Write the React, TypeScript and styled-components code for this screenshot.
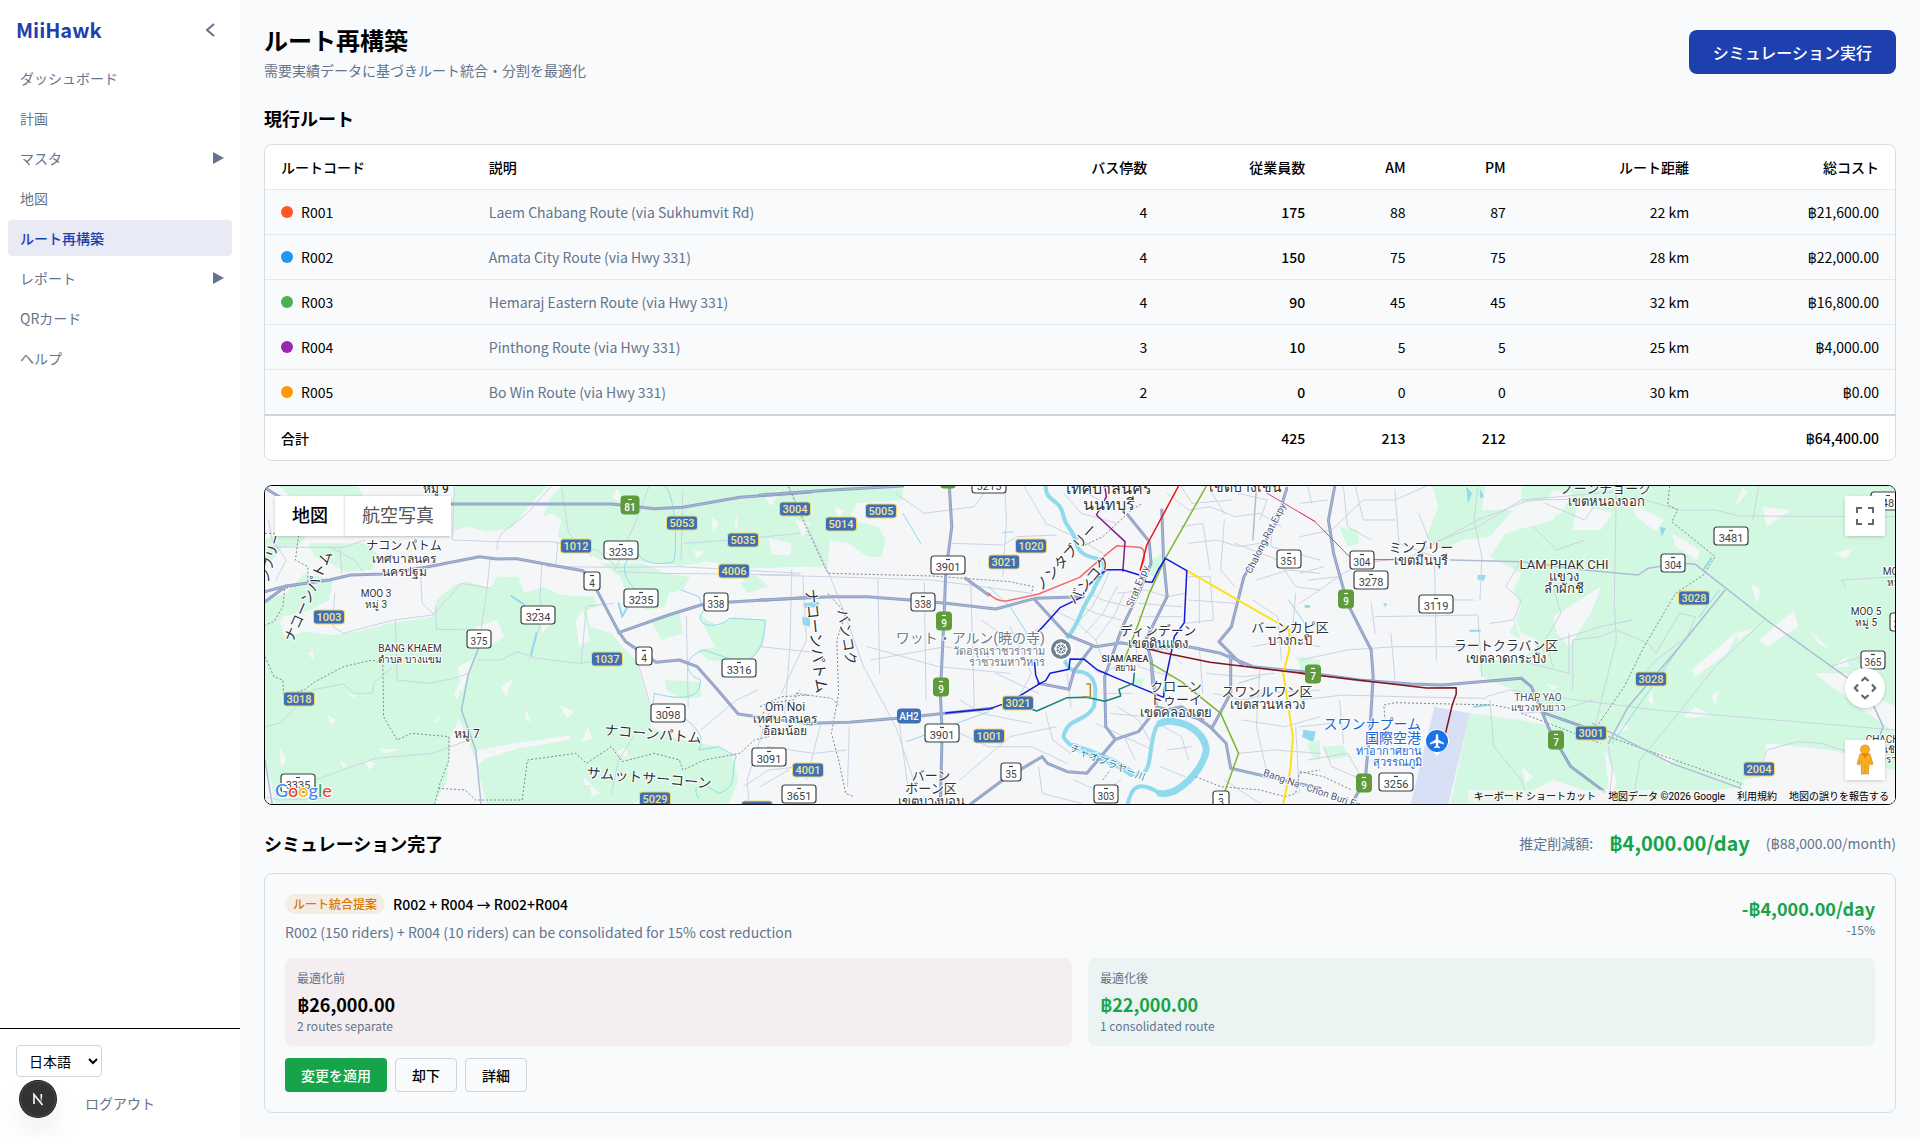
import React, { useState } from "react";
import styled, { createGlobalStyle, css } from "styled-components";

const color = {
  page: "#f8fafc",
  surface: "#ffffff",
  text: "#000000",
  muted: "#64748b",
  line: "#d8dde3",
  rowLine: "#e5e8ec",
  strong: "#cbd5dc",
  primary: "#1e40af",
  success: "#16a34a",
};

const GlobalStyle = createGlobalStyle`
  *, *::before, *::after { box-sizing: border-box; }
  body {
    margin: 0;
    background: ${color.page};
    color: ${color.text};
    font-family: "Noto Sans CJK JP", Lato, sans-serif;
    font-size: 14px;
    line-height: 20px;
  }
  h1, h2, p { margin: 0; }
  button, select { font: inherit; color: inherit; }
  button { cursor: pointer; }
`;

const Shell = styled.div`
  display: flex;
  min-height: 100vh;
`;

/* ---------- Sidebar ---------- */

const Sidebar = styled.aside`
  position: sticky;
  top: 0;
  flex: none;
  display: flex;
  flex-direction: column;
  width: 240px;
  height: 100vh;
  background: ${color.surface};
`;

const SidebarHeader = styled.div`
  display: flex;
  align-items: center;
  justify-content: space-between;
  height: 60px;
  padding: 0 16px;
`;

const Brand = styled.a`
  color: ${color.primary};
  font-size: 20px;
  font-weight: 700;
  line-height: 28px;
  text-decoration: none;
`;

const CollapseButton = styled.button`
  display: grid;
  place-items: center;
  width: 28px;
  height: 28px;
  padding: 0;
  border: 0;
  background: none;
  color: ${color.muted};
`;

const NavList = styled.ul`
  display: flex;
  flex: 1;
  flex-direction: column;
  gap: 4px;
  margin: 0;
  padding: 0 8px;
  list-style: none;
`;

const NavLink = styled.a<{ $active?: boolean }>`
  display: flex;
  align-items: center;
  justify-content: space-between;
  padding: 8px;
  padding-left: 12px;
  border-radius: 4px;
  color: ${color.muted};
  text-decoration: none;
  ${(p) =>
    p.$active &&
    css`
      background: #e8eaf6;
      color: ${color.primary};
      font-weight: 500;
    `}
`;

const SidebarFooter = styled.div`
  display: flex;
  flex-direction: column;
  align-items: flex-start;
  gap: 8px;
  padding: 16px;
  border-top: 1px solid #000;
`;

const LanguageSelect = styled.select`
  height: 32px;
  padding: 0 8px;
  min-width: 86px;
  border: 1px solid #cbd5dc;
  border-radius: 4px;
  background: ${color.surface};
`;

const LogoutButton = styled.button`
  width: 100%;
  padding: 8px;
  border: 0;
  background: none;
  color: ${color.muted};
`;

const DevBadge = styled.button`
  position: fixed;
  bottom: 20px;
  left: 20px;
  display: grid;
  place-items: center;
  width: 36px;
  height: 36px;
  padding: 0;
  border: 0;
  border-radius: 50%;
  background: #333;
  box-shadow: 0 0 0 1px #171717, inset 0 0 0 1px #4a4a4a, 0 16px 32px -8px rgba(0, 0, 0, 0.24);
`;

/* ---------- Main ---------- */

const Main = styled.main`
  flex: 1;
  display: flex;
  flex-direction: column;
  gap: 24px;
  min-width: 0;
  padding: 24px;
`;

const PageHeader = styled.header`
  display: flex;
  align-items: center;
  justify-content: space-between;
`;

const PageTitle = styled.h1`
  margin-bottom: 4px;
  font-size: 24px;
  font-weight: 700;
  line-height: 32px;
`;

const Muted = styled.p`
  color: ${color.muted};
`;

const RunButton = styled.button`
  padding: 10px 24px;
  border: 0;
  border-radius: 8px;
  background: ${color.primary};
  color: #fff;
  font-size: 16px;
  font-weight: 500;
  line-height: 24px;
`;

const Section = styled.section<{ $gap: number }>`
  display: flex;
  flex-direction: column;
  gap: ${(p) => p.$gap}px;
`;

const SectionTitle = styled.h2`
  font-size: 18px;
  font-weight: 700;
  line-height: 28px;
`;

const TableCard = styled.div`
  overflow: hidden;
  border: 1px solid ${color.line};
  border-radius: 8px;
`;

const Table = styled.table`
  width: 100%;
  border-collapse: separate;
  border-spacing: 0;
  table-layout: fixed;
  thead, tfoot { background: ${color.surface}; }
  thead th, tbody tr:not(:last-child) td { border-bottom: 1px solid ${color.rowLine}; }
  tfoot td { border-top: 2px solid ${color.strong}; }
`;

const cellStyle = css<{ $right?: boolean; $strong?: boolean; $muted?: boolean }>`
  padding: 12px 16px;
  text-align: ${(p) => (p.$right ? "right" : "left")};
  font-weight: ${(p) => (p.$strong ? 500 : 400)};
  color: ${(p) => (p.$muted ? color.muted : color.text)};
`;
const Th = styled.th`${cellStyle}`;
const Td = styled.td`${cellStyle}`;
const Col = styled.col<{ $w?: string }>`
  width: ${(p) => p.$w ?? "auto"};
`;

const CodeCell = styled.span`
  display: flex;
  align-items: center;
  gap: 8px;
`;

const Dot = styled.span<{ $color: string }>`
  width: 12px;
  height: 12px;
  border-radius: 50%;
  background: ${(p) => p.$color};
`;

/* ---------- Map ---------- */

const MapFrame = styled.section`
  position: relative;
  height: 320px;
  overflow: hidden;
  border: 1px solid #000;
  border-radius: 8px;
  font-family: Roboto, "Noto Sans CJK JP", sans-serif;
`;

const MapCanvas = styled.svg`
  display: block;
  width: 100%;
  height: 100%;
`;

const MapTypes = styled.div`
  position: absolute;
  top: 10px;
  left: 10px;
  display: flex;
  box-shadow: 0 1px 4px -1px rgba(0, 0, 0, 0.3);
`;

const MapTypeButton = styled.button<{ $on?: boolean }>`
  height: 40px;
  padding: 0 17px;
  border: 0;
  background: #fff;
  color: ${(p) => (p.$on ? "#000" : "#565656")};
  font-size: 18px;
  font-weight: ${(p) => (p.$on ? 500 : 400)};
  & + & { box-shadow: -1px 0 2px rgba(0, 0, 0, 0.12); }
`;

const MapControls = styled.div`
  position: absolute;
  top: 10px;
  right: 10px;
  bottom: 24px;
  display: flex;
  flex-direction: column;
  gap: 32px;
`;

const MapControl = styled.button<{ $round?: boolean; $push?: boolean }>`
  display: grid;
  place-items: center;
  width: 40px;
  height: 40px;
  margin-top: ${(p) => (p.$push ? "auto" : "0")};
  padding: 0;
  border: 0;
  border-radius: ${(p) => (p.$round ? "50%" : "0")};
  background: #fff;
  box-shadow: 0 1px 4px -1px rgba(0, 0, 0, 0.3);
`;

const Attribution = styled.div`
  position: absolute;
  right: 0;
  bottom: 0;
  display: flex;
  background: rgba(245, 245, 245, 0.7);
  font-size: 10px;
  line-height: 14px;
`;

const AttributionItem = styled.a`
  padding: 0 6px;
  color: #000;
  text-decoration: none;
`;

/* ---------- Simulation result ---------- */

const ResultHeader = styled.div`
  display: flex;
  align-items: center;
  justify-content: space-between;
`;

const Savings = styled.div`
  display: flex;
  align-items: center;
  gap: 16px;
  color: ${color.muted};
`;

const Amount = styled.strong<{ $large?: boolean; $positive?: boolean }>`
  display: block;
  color: ${(p) => (p.$positive ? color.success : color.text)};
  font-size: ${(p) => (p.$large ? 20 : 18)}px;
  font-weight: 700;
  line-height: 28px;
`;

const Card = styled.article`
  padding: 20px;
  border: 1px solid ${color.line};
  border-radius: 8px;
`;

const CardHead = styled.div`
  display: flex;
  justify-content: space-between;
  margin-bottom: 16px;
`;

const CardTitle = styled.div`
  display: flex;
  align-items: center;
  gap: 8px;
  margin-bottom: 8px;
  font-weight: 500;
`;

const Badge = styled.span`
  padding: 2px 8px;
  border-radius: 10px;
  background: #f5ede4;
  color: #d97706;
  font-size: 12px;
  line-height: 16px;
`;

const CardSaving = styled.div`
  text-align: right;
`;

const Caption = styled.p`
  color: ${color.muted};
  font-size: 12px;
  line-height: 16px;
`;

const Compare = styled.div`
  display: grid;
  grid-template-columns: 1fr 1fr;
  gap: 16px;
  margin-bottom: 12px;
`;

const CompareBox = styled.div<{ $after?: boolean }>`
  padding: 12px;
  border-radius: 8px;
  background: ${(p) => (p.$after ? "#ebf4f3" : "#f5eef0")};
  ${Caption}:first-child { margin-bottom: 4px; }
`;

const Actions = styled.div`
  display: flex;
  gap: 8px;
`;

const ActionButton = styled.button<{ $primary?: boolean }>`
  padding: 6px 16px;
  border: ${(p) => (p.$primary ? "0" : "1px solid #cbd5dc")};
  border-radius: 4px;
  background: ${(p) => (p.$primary ? color.success : "transparent")};
  color: ${(p) => (p.$primary ? "#fff" : color.text)};
  font-weight: 500;
`;

/* ---------- Data ---------- */

type NavItem = { label: string; active?: boolean; children?: boolean };
const nav: NavItem[] = [
  { label: "ダッシュボード" },
  { label: "計画" },
  { label: "マスタ", children: true },
  { label: "地図" },
  { label: "ルート再構築", active: true },
  { label: "レポート", children: true },
  { label: "QRカード" },
  { label: "ヘルプ" },
];

const columns: { label: string; width?: string; right?: boolean }[] = [
  { label: "ルートコード", width: "12.75%" },
  { label: "説明" },
  { label: "バス停数", width: "10%", right: true },
  { label: "従業員数", width: "9.7%", right: true },
  { label: "AM", width: "6.15%", right: true },
  { label: "PM", width: "6.15%", right: true },
  { label: "ルート距離", width: "11.25%", right: true },
  { label: "総コスト", width: "11.65%", right: true },
];

const routes = [
  { code: "R001", dot: "#ff5722", name: "Laem Chabang Route (via Sukhumvit Rd)", stops: 4, riders: 175, am: 88, pm: 87, km: 22, cost: "21,600.00" },
  { code: "R002", dot: "#2196f3", name: "Amata City Route (via Hwy 331)", stops: 4, riders: 150, am: 75, pm: 75, km: 28, cost: "22,000.00" },
  { code: "R003", dot: "#4caf50", name: "Hemaraj Eastern Route (via Hwy 331)", stops: 4, riders: 90, am: 45, pm: 45, km: 32, cost: "16,800.00" },
  { code: "R004", dot: "#9c27b0", name: "Pinthong Route (via Hwy 331)", stops: 3, riders: 10, am: 5, pm: 5, km: 25, cost: "4,000.00" },
  { code: "R005", dot: "#ff9800", name: "Bo Win Route (via Hwy 331)", stops: 2, riders: 0, am: 0, pm: 0, km: 30, cost: "0.00" },
];

/* ---------- Map drawing ---------- */

/* The map is surveyed in three tiles, each with its own grid. */
type TileName = "west" | "mid" | "east";
const tiles: Record<TileName, { x: number; y: number; sx: number; sy: number }> = {
  west: { x: 240, y: 460, sx: 1 / 2.8, sy: 1 / 3 },
  mid: { x: 760, y: 460, sx: 1 / 2.8, sy: 1 / 3 },
  east: { x: 1300, y: 460, sx: 1 / 2.529, sy: 1 / 3 },
};
const place = (t: TileName, x: number, y: number) => {
  const o = tiles[t];
  return { x: Math.round(o.x + x * o.sx), y: Math.round(o.y + y * o.sy) };
};

const Tile = ({ name, children }: { name: TileName; children: React.ReactNode }) => {
  const o = tiles[name];
  return <g transform={`translate(${o.x} ${o.y}) scale(${o.sx} ${o.sy})`}>{children}</g>;
};

const Line = ({ d, c, w, dash }: { d: string; c: string; w: number; dash?: string }) => (
  <path d={d} fill="none" stroke={c} strokeWidth={w} strokeDasharray={dash} strokeLinejoin="round" strokeLinecap={dash ? "butt" : "round"} vectorEffect="non-scaling-stroke" />
);
const Lines = ({ list, c, w, dash }: { list: string[]; c: string; w: number; dash?: string }) => (
  <>{list.map((d) => <Line key={d} d={d} c={c} w={w} dash={dash} />)}</>
);
const Highways = ({ list }: { list: string[] }) => (
  <>
    <Lines list={list} c="#8f9fc4" w={3} />
    <Lines list={list} c="#aab9d8" w={1} />
  </>
);

const GREEN = "#d3f8e2";
const LAND = "#f5f6f8";
const WATER = "#90daee";
const STREET = "#cbd3e3";

const green: Record<TileName, string[]> = {
  west: [
    "M110,78 L330,78 L345,108 L150,120 Z",
    "M600,78 L860,78 L800,150 L770,190 L760,205 L690,215 L640,200 L600,210 Z",
    "M900,78 L1568,78 L1568,320 L1430,325 L1310,305 L1235,318 L1130,305 L1010,300 L960,270 L890,230 L900,180 L870,160 L850,170 L870,110 Z",
    "M70,240 L110,220 L130,190 L170,190 L185,230 L160,260 L120,260 L90,300 L70,310 Z",
    "M190,250 L350,250 L385,280 L370,330 L300,335 L250,310 L210,290 Z",
    "M70,420 L130,400 L180,340 L260,360 L250,420 L200,450 L120,470 L90,520 L70,530 Z",
    "M70,510 L110,480 L125,530 L180,515 L260,525 L330,515 L420,490 L540,470 L550,420 L600,375 L640,365 L700,385 L720,350 L780,350 L795,400 L850,380 L900,405 L990,410 L1000,440 L970,450 L980,500 L1040,520 L1070,560 L1110,600 L1130,680 L1150,740 L1150,800 L1210,830 L1290,850 L1340,860 L1380,890 L1395,960 L1370,1032 L1180,1032 L1150,1000 L1100,1032 L690,1032 L660,900 L600,740 L640,620 L600,700 L620,760 L590,830 L580,960 L545,1032 L100,1032 L70,890 Z",
    "M1010,310 L1130,310 L1190,340 L1260,350 L1240,390 L1200,400 L1190,440 L1140,450 L1090,420 L1065,350 Z",
    "M1280,460 L1340,500 L1380,470 L1475,480 L1465,560 L1420,610 L1310,600 L1280,570 L1330,560 Z",
    "M1190,660 L1290,665 L1290,710 L1240,718 L1195,690 Z",
    "M1400,370 L1440,340 L1480,380 L1420,400 Z",
    "M1150,480 L1230,460 L1240,520 L1180,540 Z",
  ],
  mid: [
    "M0,78 L400,78 L400,120 L270,130 L250,180 L330,200 L352,240 L340,290 L300,290 L250,250 L195,240 L190,322 L100,320 L105,235 L0,225 Z",
    "M1100,300 L1125,280 L1120,340 L1090,350 Z",
    "M1045,655 L1075,655 L1070,680 L1045,675 Z",
    "M1500,590 L1568,600 L1568,640 L1520,640 Z",
    "M1530,850 L1568,840 L1568,900 L1545,890 Z",
  ],
  east: [
    "M335,78 L470,78 L460,150 L540,150 L480,230 L410,240 L360,270 L320,230 L350,140 Z",
    "M100,200 L145,210 L150,250 L120,260 Z",
    "M0,590 L50,600 L50,640 L0,640 Z",
    "M560,78 L1506,78 L1506,740 L1470,720 L1380,640 L1300,640 L1506,820 L1506,940 L1440,900 L1340,870 L1180,850 L1160,960 L1120,980 L800,1032 L790,960 L770,1010 L640,960 L520,1032 L380,1032 L430,760 L560,780 L640,800 L600,720 L460,650 L450,600 L540,600 L600,560 L530,520 L560,440 L540,390 L560,340 L480,290 L520,220 L640,180 L680,110 L560,130 Z",
    "M60,860 L110,855 L120,890 L70,900 Z",
  ],
};

const shards: Record<TileName, string[]> = {
  west: [
    "M730,680 L765,655 L745,710 Z", "M895,735 L935,755 L915,775 Z", "M800,745 L815,785 L800,780 Z", "M540,790 L560,765 L555,785 Z", "M975,800 L955,845 L985,835 Z",
    "M665,870 L770,850 L930,825 L920,840 L780,865 L690,895 L660,920 Z", "M390,865 L450,870 L400,880 Z", "M245,765 L268,780 L255,795 Z", "M190,580 L205,570 L205,600 Z", "M300,700 L325,705 L315,715 Z",
    "M280,900 L300,915 L290,925 Z", "M660,500 L720,480 L740,530 L700,560 L650,545 Z", "M840,460 L880,480 L845,520 Z", "M1320,170 L1340,190 L1325,220 Z", "M1390,165 L1395,205 L1385,205 Z",
    "M1270,270 L1300,275 L1280,295 Z", "M1480,235 L1545,250 L1540,285 L1490,285 Z", "M1040,110 L1060,85 L1070,130 Z", "M960,950 L985,975 L965,975 Z", "M1050,880 L1080,860 L1085,890 Z",
    "M940,480 L960,450 L980,540 L950,560 Z", "M610,620 L650,600 L620,700 Z", "M350,900 L380,910 L360,930 Z", "M110,860 L130,900 L115,920 Z", "M980,975 L1010,1000 L985,1010 Z", "M450,430 L540,418 L550,445 L470,455 Z",
  ],
  mid: ["M10,100 L60,90 L30,140 Z", "M100,180 L140,190 L120,230 Z", "M210,140 L235,150 L220,185 Z"],
  east: [
    "M640,90 L690,100 L660,160 L600,190 Z", "M700,130 L790,160 L760,210 L690,210 Z", "M840,130 L920,180 L900,215 L850,170 Z", "M1170,140 L1240,150 L1180,200 Z", "M1350,280 L1400,265 L1380,295 Z", "M940,220 L1010,270 L1005,300 L950,260 Z",
    "M640,470 L760,380 L740,450 L680,560 L650,520 Z", "M1160,540 L1250,450 L1260,500 L1180,560 Z", "M990,630 L1110,510 L1080,580 L1000,650 Z", "M1290,510 L1340,570 L1310,550 Z", "M970,770 L1000,740 L1040,765 L990,775 Z", "M620,670 L655,680 L640,690 Z",
    "M1140,370 L1165,390 L1155,430 Z", "M800,820 L820,790 L830,810 Z", "M900,870 L950,900 L930,915 Z", "M1040,710 L1060,690 L1050,735 Z", "M1100,520 L1150,505 L1110,540 Z", "M770,860 L800,960 L790,1032 L740,1032 L780,980 Z", "M540,460 L560,520 L600,540 L570,590 Z", "M880,720 L890,690 L895,740 Z",
    "M1100,140 L1120,80 L1130,100 Z", "M1120,960 L1220,940 L1506,930 L1506,1032 L1280,1032 L1130,1000 Z", "M1350,620 L1380,590 L1390,620 Z", "M560,920 L590,950 L570,970 Z",
  ],
};

const streets: Record<TileName, string[]> = {
  west: [
    "M600,80 L595,240 L720,245 L870,245 L1000,270 L1060,325", "M720,270 C715,200 780,200 820,140 L870,80", "M700,300 L690,400 L675,510 L550,508 L548,440", "M845,310 L840,420 L850,460 L812,595", "M890,245 L885,310",
    "M1145,80 L1110,180 L1085,240 L1050,330", "M70,260 L200,262 L290,262 L350,240", "M265,400 L260,500 L290,520 L430,480 L540,465 L620,370 L700,385", "M505,330 L510,430 L545,465", "M435,480 L440,660 L530,670 L600,655 L640,640",
    "M665,600 L730,600 L775,575 L830,595 L950,610 L980,605", "M970,440 L955,610", "M975,438 L1045,430", "M1545,330 L1540,560 L1525,760", "M1250,470 L1255,740", "M1115,610 L1150,740",
    "M200,690 L290,672 L320,700 L370,700 L375,670 L400,645 L425,625", "M70,800 L110,790 L160,740", "M210,960 L300,925 L380,895 L540,880 L640,840", "M70,1010 L110,1020 L240,1015", "M1290,810 L1390,720 L1450,690",
    "M900,80 L920,220 L985,290", "M860,320 L1060,322 L1230,320 L1568,340", "M1245,250 L1380,240 L1568,220", "M80,180 L90,240 L130,300 L100,360", "M250,260 L320,300 L345,335", "M280,270 L285,340", "M1410,980 L1480,930 L1568,920", "M1100,830 L1060,900 L1040,1000",
    "M1060,335 L1180,340 L1568,345", "M1480,760 L1420,960 L1425,1032", "M1240,90 L1235,300",
  ],
  mid: [
    "M0,345 L190,350 L480,360 L760,400", "M80,80 L150,240 L200,360 L240,470 L290,620 L380,800 L430,960", "M330,360 L335,640", "M460,370 L465,720", "M640,80 L600,140 L460,160 L380,100", "M540,250 L680,255 L720,230 L830,225", "M685,80 L690,180 L680,350", "M310,600 L520,560 L640,590",
    "M300,560 L500,620 L700,640", "M120,350 L130,540 L60,700", "M590,360 L600,740", "M250,800 L245,980 M390,790 L420,1030 M170,790 L130,960", "M560,820 L640,860 L760,860 L860,910", "M740,80 L800,190 L900,240 L960,280", "M560,960 L700,830 L830,800", "M0,560 L180,580",
    "M820,450 L880,480 L940,540 L960,600 M900,440 L940,460 L1010,480 M920,400 L960,420 L1030,440", "M880,500 L930,440 L960,380 L980,330 M910,520 L960,460 L1000,380 M940,540 L990,470 L1020,400", "M1000,400 L1080,390 L1140,410 L1190,400 M1060,430 L1180,440 M1060,470 L1180,470", "M1140,100 L1200,150 L1260,140 L1330,170 L1400,160 L1460,200",
    "M1200,250 L1280,240 L1340,260 L1400,250 M1180,200 L1240,190 L1260,330 M1300,180 L1290,330 L1330,380", "M1200,350 L1260,350 L1270,480 L1190,490 M1230,350 L1230,490 M1200,420 L1330,430", "M1330,250 L1450,300 L1500,380 L1568,390 M1440,160 L1430,260 L1568,300", "M1390,360 L1480,330 L1568,340 M1380,420 L1450,470 L1460,600 M1500,400 L1490,520",
    "M1380,560 L1480,540 L1568,560 M1400,700 L1568,690 M1350,780 L1470,800 L1568,770 M1400,620 L1390,800", "M1000,740 L1060,780 L1090,840 M980,760 L1080,770 M970,700 L1040,700 M940,790 L1100,870 M1020,830 L1050,900", "M1270,700 L1350,720 L1430,700 M1250,640 L1350,650 L1440,640 M1230,560 L1240,700", "M1130,800 L1180,830 L1200,900 M1140,870 L1210,860 M1120,920 L1190,950",
    "M1340,880 L1440,870 L1568,880 M1390,800 L1420,940 M1300,960 L1400,1030 M1500,800 L1510,1000", "M700,500 L760,640 L720,720 M620,480 L700,540 L800,500 M660,640 L780,700", "M860,640 L870,740 M800,760 L820,840 L870,880 M560,720 L620,760 L760,790", "M780,920 L790,1000 L900,1030 M880,960 L960,1000 L1010,960", "M1050,540 L1060,620 L1150,650 M1110,540 L1180,610 M930,620 L950,640 L1000,620",
    "M1180,80 L1210,130 L1320,120 M1260,90 L1300,160 M1340,100 L1420,120 L1400,180", "M850,100 L900,160 L1000,190 M880,80 L950,120", "M20,860 L150,880 L240,870 M0,980 L80,930",
  ],
  east: [
    "M0,230 L80,210 L160,120 L240,120 L320,78", "M240,90 L250,250 L340,290 M300,160 L330,250 L450,200 L560,120 L800,95", "M0,430 L110,340 L160,310 L280,290 L450,180 L580,120 L860,115 L960,150 L1050,150 L1110,168 L1506,170", "M180,430 L190,520 M340,290 L345,600 M190,470 L450,465 L460,650",
    "M0,600 L120,570 L240,560 L450,560", "M230,520 L240,660 M370,420 L440,420", "M450,80 L440,180 L460,290 L455,420", "M480,490 L540,480 L560,420 L520,380 L560,300", "M640,380 L660,460 L620,540 L640,620", "M800,80 L795,430 L800,540 L750,780 L740,830",
    "M690,690 L690,540 L760,530 L800,510 L880,550 L900,580 L960,460 L1000,470 L980,530 L900,600 L860,660", "M470,710 L530,690 L700,720 L900,750 L1506,810", "M560,760 L660,750 L740,720", "M1175,480 L1050,620 L950,770 L860,900 L840,1032", "M780,860 L790,930 L780,1032", "M1160,80 L1145,180",
    "M1160,950 L1180,870 L1260,845 L1320,850 L1420,890", "M0,720 L110,705 L250,710 L470,715", "M60,860 L80,920 L160,960 M20,900 L120,880 L150,940", "M480,720 L490,860 L560,960 L580,1032", "M580,610 L680,640 L680,520", "M600,560 L760,500 L840,480", "M1380,380 L1370,360 L1506,350 M1340,620 L1420,590", "M590,200 L650,270 L720,240 M620,130 L720,180 L760,110",
    "M0,130 L70,120 M20,80 L30,130 M110,80 L120,200 L180,240 M140,80 L160,180 L240,180", "M0,340 L60,320 M20,360 L100,350", "M100,720 L110,850 M0,800 L80,790",
  ],
};

const midRoads: Record<TileName, string[]> = {
  west: ["M670,560 L640,640 L620,750 L660,870 L675,1032", "M70,900 L90,1032"],
  mid: ["M1390,80 L1380,240"],
  east: ["M380,300 L560,305 L720,330 L855,345 L880,325 L960,310 L1000,313 L1180,480 L1380,650 L1440,710 L1475,800 L1455,860", "M740,790 L940,910 L1115,985", "M1075,390 L960,560 L830,740 L780,850"],
};

const highways: Record<TileName, string[]> = {
  west: [
    "M70,84 L140,130", "M560,132 L1040,132 L1160,146 L1240,142 L1400,112 L1600,96",
    "M70,395 L130,378 L250,360 L310,345 L400,342 L520,322 L670,290 L720,297 L775,296 L960,332 L985,362 L1060,515 L1080,545 L1165,607 L1230,600 L1280,620 L1330,680 L1395,762 L1480,775 L1600,792",
    "M70,425 L130,378", "M1060,518 L1200,465 L1290,435 L1340,428 L1600,412",
  ],
  mid: [
    "M0,105 L200,90 L400,78", "M0,420 L200,410 L300,410 L420,420 L520,430 L660,447 L770,415 L905,410", "M530,78 L537,200 L520,340 L515,480 L505,700 L510,820 L505,1032", "M140,790 L250,787 L400,773 L520,760 L650,745",
    "M575,355 L640,405 M770,420 L860,525 L940,560 L1010,548 L1100,565 L1200,560 L1290,580 L1380,620 L1560,640", "M590,1032 L680,960 L790,890 L805,910 L860,935 L915,940 L995,838 L1060,815 L1100,760 L1180,740 L1260,800 L1305,850 L1318,925 L1440,955 L1568,985",
    "M1125,150 L1130,300 L1140,410 L1080,540 L1095,600 L1100,680", "M1030,165 L1090,245 L1095,310 L1060,400 L1015,500 L965,650 L968,800 L995,838", "M1475,85 L1445,190 L1355,350 L1320,500 L1285,545 L1350,615 M1318,580 L1318,700 L1265,805 M780,670 L865,688 L880,630 L930,560",
    "M1095,600 L1110,740 L1240,780",
  ],
  east: [
    "M88,78 L72,180 L85,280 L120,430 L180,570 L185,650 L178,790 L165,960 L130,1032", "M0,635 L150,660 L280,672 L360,675 L560,655 L585,680 L635,820 L685,920 L770,995", "M620,760 L740,810",
  ],
};

const rivers: { t: TileName; d: string; w: number }[] = [
  { t: "mid", w: 4, d: "M800,78 C800,130 840,110 850,170 C855,200 880,210 885,250 C895,290 930,290 955,300 C980,330 945,350 930,400 C900,440 890,500 865,525 C835,570 850,640 900,635 C950,650 940,700 935,740 C910,790 860,770 850,830 C870,880 990,900 1040,940 C1110,960 1080,870 1110,800 C1140,760 1240,790 1252,860 C1250,920 1170,1010 1120,1000 C1060,960 1040,980 1030,1032" },
  { t: "mid", w: 7, d: "M1120,790 C1160,770 1240,800 1250,870 C1240,930 1170,1010 1120,1000 M880,860 C930,880 990,900 1040,940" },
  { t: "west", w: 1, d: "M1190,78 C1220,110 1225,250 1215,305 C1180,315 1130,315 1115,280 C1060,300 1070,350 1105,385 M1235,390 L1285,410 L1300,450 C1260,500 1340,510 1370,475 L1470,480 C1470,560 1440,600 1410,605 M1380,600 L1300,570 C1240,590 1240,640 1290,660 C1290,720 1230,720 1160,700 L1150,780 M1220,760 C1290,800 1300,840 1285,870 L1340,860 L1390,890 C1370,930 1400,980 1340,1000 C1290,960 1260,980 1285,1015" },
  { t: "west", w: 2, d: "M760,408 L790,430 L820,460 M1060,430 L1070,470 L1085,440 M830,520 L815,585" },
  { t: "east", w: 2, d: "M1040,295 L1020,330 M430,512 L455,512 M440,740 L475,735" },
  { t: "east", w: 1, d: "M1060,390 L1010,470 M960,560 L790,850" },
  { t: "mid", w: 1, d: "M400,160 L450,250 M680,218 L710,215 M410,845 L640,755 M1480,420 L1545,520 M1340,670 L1400,650 M640,380 L700,440 L790,590" },
];

const borders: Record<TileName, string[]> = {
  west: [
    "M70,220 L165,220 L155,300 L190,320 L190,370 L125,385 L120,440 L95,485 L70,495", "M70,590 L95,650 L120,660 L122,705 L180,690 L210,665 L290,620 L370,600 L400,610 L402,770 L440,840 L480,820 L585,830 L585,900 L560,970 L545,1032",
    "M555,985 L630,990 L660,1020 L790,1020 L805,900 L940,880 L970,910 L1040,860 L1070,905 L1160,880 L1230,900 L1240,930 L1300,900 L1400,880 L1440,840 L1480,830 L1450,790 L1480,730 L1550,720 L1568,690",
  ],
  mid: ["M80,80 L120,180 L190,340 L480,348 L700,365 L765,380 L760,400", "M190,400 L240,460 L215,540 L220,700 L200,820 L220,900 L240,1000 L262,1010", "M100,700 L200,715 L225,740", "M900,260 L960,230 L1040,150 L1070,130", "M0,740 L60,710 L140,705", "M960,960 L980,930 M1220,950 L1290,980 L1400,990 L1470,1010 L1500,1000 L1510,940 L1568,930"],
  east: ["M935,78 L930,135 L955,150 L940,185 L1050,290 L1020,345 L950,400 L870,560 L820,680 L750,800", "M530,745 L490,735 L240,728 L212,735 L215,780", "M560,760 L650,800 L760,850 M780,830 L1115,970 L1110,985", "M0,935 L60,950 L130,990"],
};

const transit: { t: TileName; d: string; c: string; w?: number }[] = [
  { t: "mid", c: "#f8666e", d: "M640,400 Q660,425 690,423 L780,402 L895,352 Q960,290 1000,257 L1060,262 Q1080,262 1075,300 L1065,330" },
  { t: "mid", c: "#e81414", d: "M1172,78 L1083,255 L1065,330" },
  { t: "mid", c: "#8b1a89", d: "M965,78 L970,110 L942,165 L1022,245 L1016,333" },
  { t: "mid", c: "#7cb82f", d: "M1250,78 L1135,295 L1090,400 L1060,490 L1020,600 M1080,600 L1110,620 L1180,665 L1290,760 L1340,880 L1300,1000" },
  { t: "mid", c: "#ffe01a", d: "M1195,332 L1460,495 L1482,510 L1482,570 L1465,640 L1492,830 L1485,930 L1465,1032", w: 2 },
  { t: "mid", c: "#1418d8", d: "M520,759 L645,746 L700,725 L780,673 L800,662 L812,640 L865,628 L868,597 L908,598 L945,630 L1000,655 L1130,712 L1135,660 L1155,560 L1160,530 L1188,488 L1195,332 L1135,295 L1115,330 L1098,367 L1080,365 L1062,345 L1015,329 L970,329 L920,375 L900,412 L840,443 L778,517" },
  { t: "mid", c: "#1418d8", d: "M768,600 L772,645 L782,673" },
  { t: "mid", c: "#148080", d: "M1048,640 L1045,670 L1005,688 L1010,708 L965,724 L915,712 L860,713 L775,753 L760,748" },
  { t: "mid", c: "#b08a2c", d: "M915,672 L925,672 L925,712 L905,710" },
  { t: "mid", c: "#801420", d: "M1080,565 L1130,578 L1260,607 L1540,643" },
  { t: "east", c: "#801420", d: "M0,640 L320,684 L395,683 L395,702 L385,735 L368,820" },
  { t: "mid", c: "#e0447c", d: "M1420,100 L1555,185", w: 1 },
  { t: "east", c: "#e0447c", d: "M0,158 L38,185 L125,290 L140,299 L250,299", w: 1 },
];

type ShieldKind = "national" | "rural" | "motorway" | "asian";
const shields: { t: TileName; k: ShieldKind; x: number; y: number; s: string }[] = [
  { t: "west", k: "motorway", x: 1091, y: 134, s: "81" }, { t: "west", k: "rural", x: 1237, y: 188, s: "5053" }, { t: "west", k: "rural", x: 1407, y: 240, s: "5035" },
  { t: "west", k: "rural", x: 940, y: 259, s: "1012" }, { t: "west", k: "rural", x: 1383, y: 334, s: "4006" }, { t: "west", k: "rural", x: 248, y: 470, s: "1003" },
  { t: "west", k: "rural", x: 1027, y: 597, s: "1037" }, { t: "west", k: "rural", x: 164, y: 718, s: "3018" }, { t: "west", k: "rural", x: 1161, y: 1016, s: "5029" },
  { t: "west", k: "rural", x: 1447, y: 1045, s: "1003" },
  { t: "west", k: "national", x: 1068, y: 271, s: "3233" }, { t: "west", k: "national", x: 985, y: 363, s: "4" }, { t: "west", k: "national", x: 1124, y: 414, s: "3235" },
  { t: "west", k: "national", x: 1334, y: 427, s: "338" }, { t: "west", k: "national", x: 833, y: 466, s: "3234" }, { t: "west", k: "national", x: 670, y: 538, s: "375" },
  { t: "west", k: "national", x: 1131, y: 588, s: "4" }, { t: "west", k: "national", x: 1396, y: 625, s: "3316" }, { t: "west", k: "national", x: 1197, y: 760, s: "3098" },
  { t: "west", k: "national", x: 1480, y: 891, s: "3091" }, { t: "west", k: "national", x: 162, y: 969, s: "3335" },
  { t: "mid", k: "rural", x: 97, y: 148, s: "3004" }, { t: "mid", k: "rural", x: 338, y: 153, s: "5005" }, { t: "mid", k: "rural", x: 226, y: 191, s: "5014" },
  { t: "mid", k: "rural", x: 760, y: 257, s: "1020" }, { t: "mid", k: "rural", x: 682, y: 305, s: "3021" }, { t: "mid", k: "rural", x: 721, y: 730, s: "3021" },
  { t: "mid", k: "rural", x: 640, y: 827, s: "1001" }, { t: "mid", k: "rural", x: 133, y: 930, s: "4001" }, { t: "mid", k: "asian", x: 417, y: 769, s: "AH2" },
  { t: "mid", k: "national", x: 640, y: 71, s: "3215" }, { t: "mid", k: "national", x: 525, y: 316, s: "3901" }, { t: "mid", k: "national", x: 455, y: 427, s: "338" },
  { t: "mid", k: "national", x: 510, y: 820, s: "3901" }, { t: "mid", k: "national", x: 703, y: 936, s: "35" }, { t: "mid", k: "national", x: 970, y: 1001, s: "303" },
  { t: "mid", k: "national", x: 110, y: 1003, s: "3651" }, { t: "mid", k: "national", x: 1482, y: 298, s: "351" }, { t: "mid", k: "national", x: 1290, y: 1020, s: "3" },
  { t: "mid", k: "motorway", x: 515, y: 483, s: "9" }, { t: "mid", k: "motorway", x: 506, y: 681, s: "9" }, { t: "mid", k: "motorway", x: 527, y: 56, s: "9" },
  { t: "east", k: "national", x: 158, y: 300, s: "304" }, { t: "east", k: "national", x: 179, y: 360, s: "3278" }, { t: "east", k: "national", x: 345, y: 433, s: "3119" },
  { t: "east", k: "national", x: 1091, y: 229, s: "3481" }, { t: "east", k: "national", x: 944, y: 309, s: "304" }, { t: "east", k: "national", x: 1450, y: 601, s: "365" },
  { t: "east", k: "national", x: 244, y: 967, s: "3256" }, { t: "east", k: "national", x: 1486, y: 124, s: "3481" }, { t: "east", k: "national", x: 1523, y: 485, s: "365" },
  { t: "east", k: "rural", x: 996, y: 413, s: "3028" }, { t: "east", k: "rural", x: 887, y: 656, s: "3028" }, { t: "east", k: "rural", x: 736, y: 820, s: "3001" }, { t: "east", k: "rural", x: 1160, y: 926, s: "2004" },
  { t: "east", k: "motorway", x: 117, y: 417, s: "9" }, { t: "east", k: "motorway", x: 33, y: 641, s: "7" }, { t: "east", k: "motorway", x: 648, y: 841, s: "7" }, { t: "east", k: "motorway", x: 162, y: 969, s: "9" },
];

const Shield = ({ t, k, x, y, s }: (typeof shields)[number]) => {
  const c = place(t, x, y);
  const national = k === "national";
  const motorway = k === "motorway";
  const w = national ? [0, 16, 20, 24, 34][s.length] : motorway ? (s.length > 1 ? 18 : 15) : k === "asian" ? 23 : 31;
  const h = national || motorway ? 18 : 14;
  const fill = national ? "#fff" : motorway ? "#5f9b3a" : "#3d70b8";
  const edge = national ? "#3c4043" : motorway ? "#5f9b3a" : k === "asian" ? "#3d70b8" : "#f5d867";
  const ink = national ? "#3c4043" : k === "rural" ? "#f2e58f" : "#fff";
  return (
    <g transform={`translate(${c.x} ${c.y})`}>
      <rect x={-w / 2} y={-h / 2} width={w} height={h} rx={3} fill={fill} stroke={edge} strokeWidth={national ? 1.2 : 1} />
      {h === 18 && <path d="M-2,-5.500 h4" stroke={ink} strokeWidth={1.2} />}
      <text y={h === 18 ? 6 : 4} textAnchor="middle" fontSize={s.length === 4 ? 11 : 10} fontWeight={national ? 400 : 500} fill={ink}>{s}</text>
    </g>
  );
};

type Label = { t: TileName; x: number; y: number; lines: string[]; size?: number; lh?: number; rotate?: number; c?: string; w?: number; end?: boolean };
/* y is the baseline of the first line */
const labels: Label[] = [
  { t: "west", x: 550, y: 98, lines: ["หมู่ 9"], size: 12, w: 500 },
  { t: "west", x: 458, y: 270, lines: ["ナコン パトム", "เทศบาลนคร", "นครปฐม"], size: 12, lh: 13 },
  { t: "west", x: 380, y: 410, lines: ["MOO 3", "หมู่ 3"], size: 10, lh: 11 },
  { t: "west", x: 477, y: 575, lines: ["BANG KHAEM", "ตำบล บางแขม"], size: 10, lh: 11 },
  { t: "west", x: 636, y: 833, lines: ["หมู่ 7"], size: 12 },
  { t: "west", x: 1155, y: 822, lines: ["ナコーンパトム"], size: 14, rotate: 5 },
  { t: "west", x: 1145, y: 953, lines: ["サムットサーコーン"], size: 14, rotate: 5 },
  { t: "west", x: 190, y: 408, lines: ["ナコーンパトム"], size: 14, rotate: -66 },
  { t: "west", x: 85, y: 290, lines: ["ンブリー"], size: 13, rotate: -75 },
  { t: "mid", x: 158, y: 543, lines: ["ナコーンパトム"], size: 15, rotate: 84 },
  { t: "mid", x: 244, y: 530, lines: ["バンコク"], size: 14, rotate: 80 },
  { t: "mid", x: 70, y: 752, lines: ["Om Noi", "เทศบาลนคร", "อ้อมน้อย"], size: 12, lh: 12 },
  { t: "mid", x: 858, y: 292, lines: ["ノンタブリー"], size: 14, rotate: -48 },
  { t: "mid", x: 920, y: 360, lines: ["バンコク"], size: 14, rotate: -50 },
  { t: "mid", x: 978, y: 103, lines: ["เทศบาลนคร", "นนทบุรี"], size: 16, lh: 16, w: 500 },
  { t: "mid", x: 1357, y: 97, lines: ["เขตบางเขน"], size: 14 },
  { t: "mid", x: 1055, y: 378, lines: ["Sirat Expy"], size: 10, rotate: -67, c: "#4a5878" },
  { t: "mid", x: 1413, y: 235, lines: ["Chalong Rat Expy"], size: 10, rotate: -63, c: "#4a5878" },
  { t: "mid", x: 797, y: 550, lines: ["ワット・アルン(暁の寺)"], size: 14, c: "#6c7d8c", end: true },
  { t: "mid", x: 799, y: 584, lines: ["วัดอรุณราชวราราม", "ราชวรมหาวิหาร"], size: 11, lh: 11, c: "#6c7d8c", end: true },
  { t: "mid", x: 1115, y: 524, lines: ["ディンデーン", "เขตดินแดง"], size: 13, lh: 13 },
  { t: "mid", x: 1022, y: 606, lines: ["SIAM AREA", "สยาม"], size: 9, lh: 9, w: 500 },
  { t: "mid", x: 1165, y: 694, lines: ["クローン", "トゥーイ", "เขตคลองเตย"], size: 13, lh: 13 },
  { t: "mid", x: 1420, y: 707, lines: ["スワンルワン区", "เขตสวนหลวง"], size: 13, lh: 13 },
  { t: "mid", x: 1483, y: 516, lines: ["バーンカピ区", "บางกะปิ"], size: 13, lh: 13 },
  { t: "mid", x: 480, y: 960, lines: ["バーン", "ボーン区", "เขตบางบอน"], size: 13, lh: 13 },
  { t: "mid", x: 975, y: 906, lines: ["チャオプラヤー川"], size: 10, rotate: 22, c: "#2c7d96" },
  { t: "mid", x: 1560, y: 990, lines: ["Bang Na - Chon Buri Expy"], size: 10, rotate: 19, c: "#4a5878" },
  { t: "east", x: 305, y: 277, lines: ["ミンブリー", "เขตมีนบุรี"], size: 13, lh: 13 },
  { t: "east", x: 775, y: 98, lines: ["ノーンチョーク", "เขตหนองจอก"], size: 13, lh: 13 },
  { t: "east", x: 667, y: 327, lines: ["LAM PHAK CHI", "แขวง", "ลำผักชี"], size: 13, lh: 12 },
  { t: "east", x: 522, y: 571, lines: ["ラートクラバン区", "เขตลาดกระบัง"], size: 13, lh: 13 },
  { t: "east", x: 603, y: 723, lines: ["THAP YAO", "แขวงทับยาว"], size: 10, lh: 10, c: "#4c5056" },
  { t: "east", x: 305, y: 808, lines: ["スワンナプーム", "国際空港"], size: 14, lh: 14, c: "#1a66d6", end: true },
  { t: "east", x: 308, y: 884, lines: ["ท่าอากาศยาน", "สุวรรณภูมิ"], size: 11, lh: 11, c: "#1a66d6", end: true },
  { t: "east", x: 1432, y: 464, lines: ["MOO 5", "หมู่ 5"], size: 10, lh: 11 },
  { t: "east", x: 1512, y: 344, lines: ["MOO 4", "หมู่ 4"], size: 10, lh: 11 },
  { t: "east", x: 1483, y: 848, lines: ["CHACHO", "ฉะเชิง", "เทรา"], size: 10, lh: 10 },
];

const MapLabel = ({ t, x, y, lines, size = 12, lh = 12, rotate = 0, c = "#2f3338", w = 400, end }: Label) => {
  const p = place(t, x, y);
  return (
    <text transform={`translate(${p.x} ${p.y}) rotate(${rotate})`} textAnchor={end ? "end" : "middle"} dominantBaseline={rotate ? "central" : "auto"} fontSize={size} fontWeight={w} fill={c} stroke="#fff" strokeWidth={2} strokeLinejoin="round" paintOrder="stroke">
      {lines.map((l, i) => <tspan key={l} x={0} y={i * lh}>{l}</tspan>)}
    </text>
  );
};

const tileNames: TileName[] = ["west", "mid", "east"];
const TileShapes = ({ shapes, fill }: { shapes: Record<TileName, string[]>; fill: string }) => (
  <>{tileNames.map((t) => <Tile key={t} name={t}>{shapes[t].map((d) => <path key={d} d={d} fill={fill} />)}</Tile>)}</>
);

const BangkokMap = () => (
  <MapCanvas viewBox="265 486 1630 318" preserveAspectRatio="xMidYMid slice" role="img" aria-label="地図">
    <rect x="265" y="486" width="1630" height="318" fill={LAND} />
    <TileShapes shapes={green} fill={GREEN} />
    <TileShapes shapes={shards} fill={LAND} />
    <Tile name="east">
      <path d="M340,740 L430,760 L375,1032 L280,1032 Z" fill="#d7e0f4" />
      <path d="M420,78 L435,100 L425,130 Z M455,85 L465,110 L455,115 Z M450,345 L470,345 L465,362 L448,358 Z M910,200 L925,205 L915,230 Z M10,810 L40,815 L30,845 L5,830 Z M210,428 L220,432 L216,442 Z" fill={WATER} />
    </Tile>
    <Tile name="mid">
      <path d="M1520,810 L1555,815 L1550,845 L1525,830 Z M1525,435 L1540,435 L1540,443 L1525,443 Z M120,430 L165,425 L165,440 L125,445 Z M118,470 L140,475 L140,500 L120,495 Z" fill={WATER} />
    </Tile>
    {tileNames.map((t) => <Tile key={t} name={t}><Lines list={streets[t]} c={STREET} w={1} /></Tile>)}
    {rivers.map((r) => <Tile key={r.d} name={r.t}><Line d={r.d} c={WATER} w={r.w} /></Tile>)}
    {tileNames.map((t) => (
      <Tile key={t} name={t}>
        <Lines list={borders[t]} c="#80868b" w={1} dash="2 2" />
        <Lines list={midRoads[t]} c="#b0bbd4" w={1.5} />
        <Highways list={highways[t]} />
      </Tile>
    ))}
    {transit.map((l) => <Tile key={l.d} name={l.t}><Line d={l.d} c={l.c} w={l.w ?? 1.5} /></Tile>)}
    {labels.map((l) => <MapLabel key={`${l.t}${l.x}${l.y}`} {...l} />)}
    {shields.map((s) => <Shield key={`${s.t}${s.x}${s.y}`} {...s} />)}

    <g transform="translate(1061 649)">
      <path d="M-12,0 a12,12 0 1 1 24,0 c0,8 -8,9 -12,15 c-4,-6 -12,-7 -12,-15 Z" fill="#fff" />
      <circle r="10" fill="#6d8491" />
      <circle r="5.500" fill="none" stroke="#fff" strokeWidth="1.500" />
      <path d="M0,-7 V7 M-7,0 H7 M-5,-5 L5,5 M5,-5 L-5,5" stroke="#fff" strokeWidth="1" />
      <circle r="2" fill="#6d8491" stroke="#fff" />
    </g>
    <g transform="translate(1437 741)">
      <path d="M-12,0 a12,12 0 1 1 24,0 c0,8 -8,9 -12,15 c-4,-6 -12,-7 -12,-15 Z" fill="#fff" />
      <circle r="11" fill="#1a73e8" />
      <path d="M0,-7 c1,0 1.200,1 1.200,2 V-1.500 L7,2 V3.500 L1.200,1.800 V5 L3,6.200 V7.200 L0,6.500 L-3,7.200 V6.200 L-1.200,5 V1.800 L-7,3.500 V2 L-1.200,-1.500 V-5 c0,-1 .2,-2 1.200,-2 Z" fill="#fff" />
    </g>
    <text x="275" y="797" fontSize="18" fontWeight="500" stroke="#fff" strokeWidth="2" paintOrder="stroke" fontFamily="Lato, Roboto, sans-serif">
      <tspan fill="#4285f4">G</tspan><tspan fill="#ea4335">o</tspan><tspan fill="#fbbc04">o</tspan><tspan fill="#4285f4">g</tspan><tspan fill="#34a853">l</tspan><tspan fill="#ea4335">e</tspan>
    </text>
  </MapCanvas>
);

const attributions = ["キーボード ショートカット", "地図データ ©2026 Google", "利用規約", "地図の誤りを報告する"];

const RouteMap = () => (
  <MapFrame aria-label="ルート地図">
    <BangkokMap />
    <MapTypes>
      <MapTypeButton type="button" $on aria-pressed="true">地図</MapTypeButton>
      <MapTypeButton type="button" aria-pressed="false">航空写真</MapTypeButton>
    </MapTypes>
    <MapControls>
      <MapControl type="button" aria-label="全画面表示">
        <svg width="18" height="18" viewBox="0 0 18 18" fill="#666"><path d="M0,0v6h2V2h4V0H0z M16,0h-4v2h4v4h2V0H16z M16,16h-4v2h6v-6h-2V16z M2,12H0v6h6v-2H2V12z" /></svg>
      </MapControl>
      <MapControl type="button" $round $push aria-label="地図のカメラ コントロール">
        <svg width="24" height="24" viewBox="0 0 24 24" fill="none" stroke="#666" strokeWidth="2.200"><path d="M8.500,5 L12,1.800 L15.500,5 M8.500,19 L12,22.200 L15.500,19 M5,8.500 L1.800,12 L5,15.500 M19,8.500 L22.200,12 L19,15.500" /></svg>
      </MapControl>
      <MapControl type="button" aria-label="ストリートビュー">
        <svg width="20" height="32" viewBox="0 0 20 32">
          <path d="M5,10 Q10,8 15,10 L18,20 L15.500,21 L14,17 L13.500,30 H10.500 V22 H9.500 V30 H6.500 L6,17 L4.500,21 L2,20 Z" fill="#fbad1c" stroke="#c8830c" strokeWidth=".6" />
          <circle cx="10" cy="5.500" r="4.500" fill="#fbad1c" stroke="#c8830c" strokeWidth=".6" />
          <path d="M6.500,10 L10,14 L13.500,10 Z" fill="#ef7b1a" />
        </svg>
      </MapControl>
    </MapControls>
    <Attribution>
      {attributions.map((a) => <AttributionItem key={a} href="#">{a}</AttributionItem>)}
    </Attribution>
  </MapFrame>
);

/* ---------- Page ---------- */

export default function App() {
  const [language, setLanguage] = useState("ja");
  return (
    <>
      <GlobalStyle />
      <Shell>
        <Sidebar>
          <SidebarHeader>
            <Brand href="#">MiiHawk</Brand>
            <CollapseButton type="button" aria-label="サイドバーを閉じる">
              <svg width="10" height="14" viewBox="0 0 10 14" fill="none" stroke="currentColor" strokeWidth="2"><path d="M9,1 L2,7 L9,13" /></svg>
            </CollapseButton>
          </SidebarHeader>
          <NavList>
            {nav.map((item) => (
              <li key={item.label}>
                <NavLink href="#" $active={item.active} aria-current={item.active ? "page" : undefined}>
                  {item.label}
                  {item.children && <svg width="11" height="12" viewBox="0 0 11 12" fill="currentColor" aria-hidden="true"><path d="M0,0 L11,6 L0,12 Z" /></svg>}
                </NavLink>
              </li>
            ))}
          </NavList>
          <SidebarFooter>
            <LanguageSelect aria-label="言語" value={language} onChange={(e) => setLanguage(e.target.value)}>
              <option value="ja">日本語</option>
            </LanguageSelect>
            <LogoutButton type="button">ログアウト</LogoutButton>
          </SidebarFooter>
        </Sidebar>

        <Main>
          <PageHeader>
            <div>
              <PageTitle>ルート再構築</PageTitle>
              <Muted>需要実績データに基づきルート統合・分割を最適化</Muted>
            </div>
            <RunButton type="button">シミュレーション実行</RunButton>
          </PageHeader>

          <Section $gap={12}>
            <SectionTitle>現行ルート</SectionTitle>
            <TableCard>
              <Table>
                <colgroup>{columns.map((c) => <Col key={c.label} $w={c.width} />)}</colgroup>
                <thead>
                  <tr>{columns.map((c) => <Th key={c.label} scope="col" $right={c.right} $strong>{c.label}</Th>)}</tr>
                </thead>
                <tbody>
                  {routes.map((r) => (
                    <tr key={r.code}>
                      <Td><CodeCell><Dot $color={r.dot} />{r.code}</CodeCell></Td>
                      <Td $muted>{r.name}</Td>
                      <Td $right>{r.stops}</Td>
                      <Td $right $strong>{r.riders}</Td>
                      <Td $right>{r.am}</Td>
                      <Td $right>{r.pm}</Td>
                      <Td $right>{r.km} km</Td>
                      <Td $right>฿{r.cost}</Td>
                    </tr>
                  ))}
                </tbody>
                <tfoot>
                  <tr>
                    <Td $strong>合計</Td>
                    <Td />
                    <Td />
                    <Td $right $strong>425</Td>
                    <Td $right $strong>213</Td>
                    <Td $right $strong>212</Td>
                    <Td />
                    <Td $right $strong>฿64,400.00</Td>
                  </tr>
                </tfoot>
              </Table>
            </TableCard>
          </Section>

          <RouteMap />

          <Section $gap={16}>
            <ResultHeader>
              <SectionTitle>シミュレーション完了</SectionTitle>
              <Savings>
                <span>推定削減額:</span>
                <Amount $large $positive>฿4,000.00/day</Amount>
                <span>(฿88,000.00/month)</span>
              </Savings>
            </ResultHeader>
            <Card>
              <CardHead>
                <div>
                  <CardTitle><Badge>ルート統合提案</Badge>R002 + R004 → R002+R004</CardTitle>
                  <Muted>R002 (150 riders) + R004 (10 riders) can be consolidated for 15% cost reduction</Muted>
                </div>
                <CardSaving>
                  <Amount $positive>-฿4,000.00/day</Amount>
                  <Caption>-15%</Caption>
                </CardSaving>
              </CardHead>
              <Compare>
                <CompareBox>
                  <Caption>最適化前</Caption>
                  <Amount>฿26,000.00</Amount>
                  <Caption>2 routes separate</Caption>
                </CompareBox>
                <CompareBox $after>
                  <Caption>最適化後</Caption>
                  <Amount $positive>฿22,000.00</Amount>
                  <Caption>1 consolidated route</Caption>
                </CompareBox>
              </Compare>
              <Actions>
                <ActionButton type="button" $primary>変更を適用</ActionButton>
                <ActionButton type="button">却下</ActionButton>
                <ActionButton type="button">詳細</ActionButton>
              </Actions>
            </Card>
          </Section>
        </Main>
      </Shell>
      <DevBadge type="button" aria-label="開発ツール">
        <svg width="18" height="18" viewBox="0 0 18 18" fill="none" strokeWidth="1.600">
          <defs>
            <linearGradient id="fade" x1="0" y1="0" x2="0" y2="1"><stop offset="0.3" stopColor="#fff" /><stop offset="1" stopColor="#fff" stopOpacity="0" /></linearGradient>
          </defs>
          <path d="M5,14 V4.500 L13.500,15" stroke="#fff" />
          <rect x="11.500" y="4" width="1.600" height="9" fill="url(#fade)" />
        </svg>
      </DevBadge>
    </>
  );
}
